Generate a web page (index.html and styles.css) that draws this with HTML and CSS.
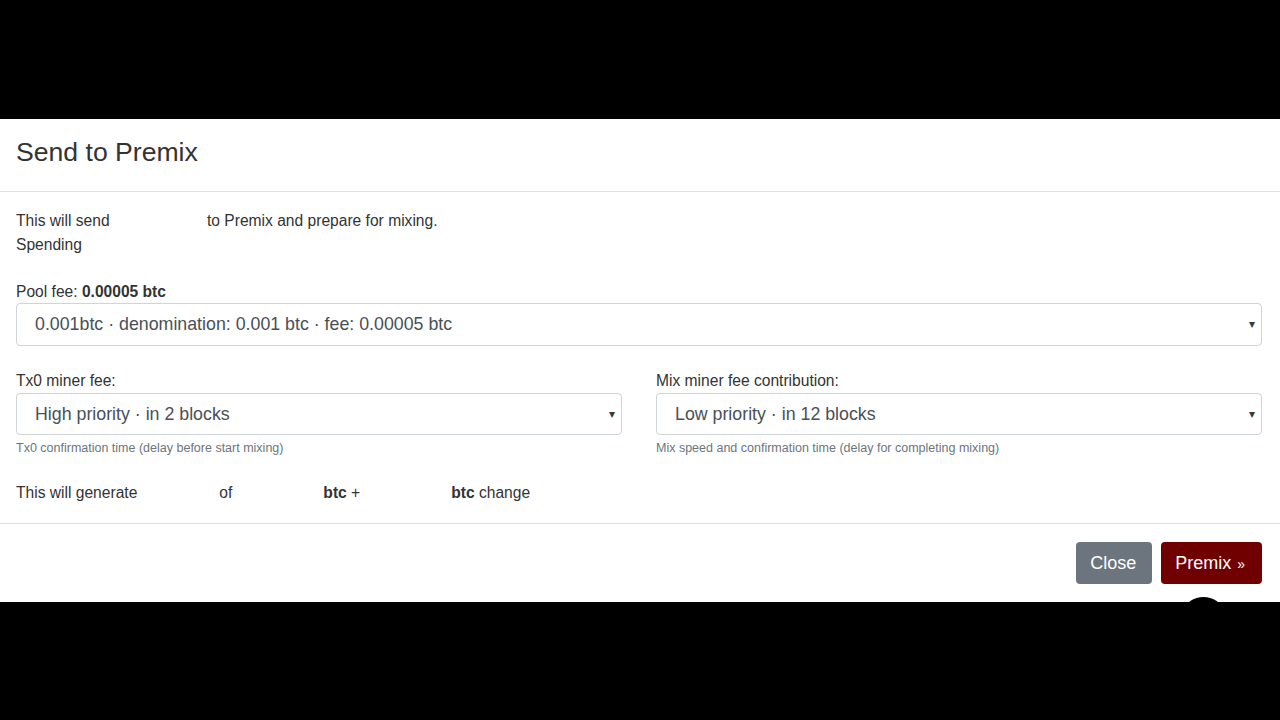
FILE: index.html
```html
<!DOCTYPE html>
<html>
<head>
<meta charset="utf-8">
<link rel="stylesheet" href="styles.css">
</head>
<body>
<div class="modal">
  <div class="modal-header">
    <h5 class="modal-title">Send to Premix</h5>
  </div>
  <div class="modal-body">
    <div class="intro">
      <div class="intro-left">This will send<br>Spending</div>
      <div class="intro-right">to Premix and prepare for mixing.</div>
    </div>
    <div class="form-group pool">
      <div class="label">Pool fee: <strong>0.00005 btc</strong></div>
      <div class="select">
        <span>0.001btc · denomination: 0.001 btc · fee: 0.00005 btc</span>
        <span class="caret">▾</span>
      </div>
    </div>
    <div class="row">
      <div class="form-group">
        <div class="label">Tx0 miner fee:</div>
        <div class="select small">
          <span>High priority · in 2 blocks</span>
          <span class="caret">▾</span>
        </div>
        <div class="help">Tx0 confirmation time (delay before start mixing)</div>
      </div>
      <div class="form-group">
        <div class="label">Mix miner fee contribution:</div>
        <div class="select small">
          <span>Low priority · in 12 blocks</span>
          <span class="caret">▾</span>
        </div>
        <div class="help">Mix speed and confirmation time (delay for completing mixing)</div>
      </div>
    </div>
    <div class="generate">
      <span>This will generate</span><span class="gap1"></span><span>of</span><span class="gap2"></span><strong>btc</strong>&nbsp;+<span class="gap3"></span><strong>btc</strong> change
    </div>
  </div>
  <div class="modal-footer">
    <button class="btn btn-secondary">Close</button>
    <button class="btn btn-primary">Premix<span class="raquo">»</span></button>
  </div>
  <div class="blob"></div>
</div>
</body>
</html>
```
FILE: styles.css
```css
html, body {
  margin: 0;
  padding: 0;
  background: #000;
  height: 720px;
  overflow: hidden;
}
body {
  font-family: "Liberation Sans", Arial, sans-serif;
  font-size: 15.6px;
  line-height: 24px;
  color: #333;
}
.modal {
  position: relative;
  margin-top: 119px;
  background: #fff;
  width: 1280px;
  height: 483px;
}
.modal-header {
  height: 73px;
  box-sizing: border-box;
  padding: 17px 16px 0;
  border-bottom: 1px solid #dee2e6;
}
.modal-title {
  margin: 0;
  font-size: 26.6px;
  font-weight: 400;
  line-height: 32px;
  color: #333;
}
.modal-body {
  padding: 17px 18px 0 16px;
  height: 331px;
  box-sizing: border-box;
}
.intro {
  display: flex;
  align-items: flex-start;
}
.intro-left {
  width: 191px;
}
.pool {
  margin-top: 23px;
}
.label {
  line-height: 24px;
}
.pool .select {
  margin-top: -1px;
  padding-bottom: 2px;
}
.select {
  height: 43px;
  box-sizing: border-box;
  border: 1px solid #ced4da;
  border-radius: 4px;
  display: flex;
  align-items: center;
  justify-content: space-between;
  padding: 0 6px 0 18px;
  font-size: 17.8px;
  color: #495057;
}
.select.small {
  height: 42px;
}
.caret {
  font-size: 12px;
  color: #343a40;
}
.row {
  display: grid;
  grid-template-columns: 1fr 1fr;
  column-gap: 34px;
  margin-top: 23px;
}
.help {
  margin-top: 4px;
  font-size: 12.5px;
  line-height: 18px;
  color: #6c757d;
}
.generate {
  margin-top: 24px;
  display: flex;
  align-items: baseline;
  white-space: pre;
}
.gap1 { width: 82px; }
.gap2 { width: 91px; }
.gap3 { width: 91px; }
.modal-footer {
  border-top: 1px solid #dee2e6;
  height: 79px;
  box-sizing: border-box;
  display: flex;
  justify-content: flex-end;
  align-items: center;
  gap: 9px;
  padding: 0 18px 0 16px;
}
.btn {
  height: 42px;
  border: none;
  border-radius: 4px;
  font-family: "Liberation Sans", Arial, sans-serif;
  font-size: 18px;
  color: #fff;
  padding: 0 16px 0 14px;
}
.btn-primary {
  background: #700000;
  padding-right: 17px;
}
.btn-secondary { background: #6c757d; }
.raquo {
  font-size: 14px;
  margin-left: 6px;
}
.blob {
  position: absolute;
  left: 1186px;
  top: 478px;
  width: 35px;
  height: 24px;
  border-radius: 50%;
  background: #000;
}
```
